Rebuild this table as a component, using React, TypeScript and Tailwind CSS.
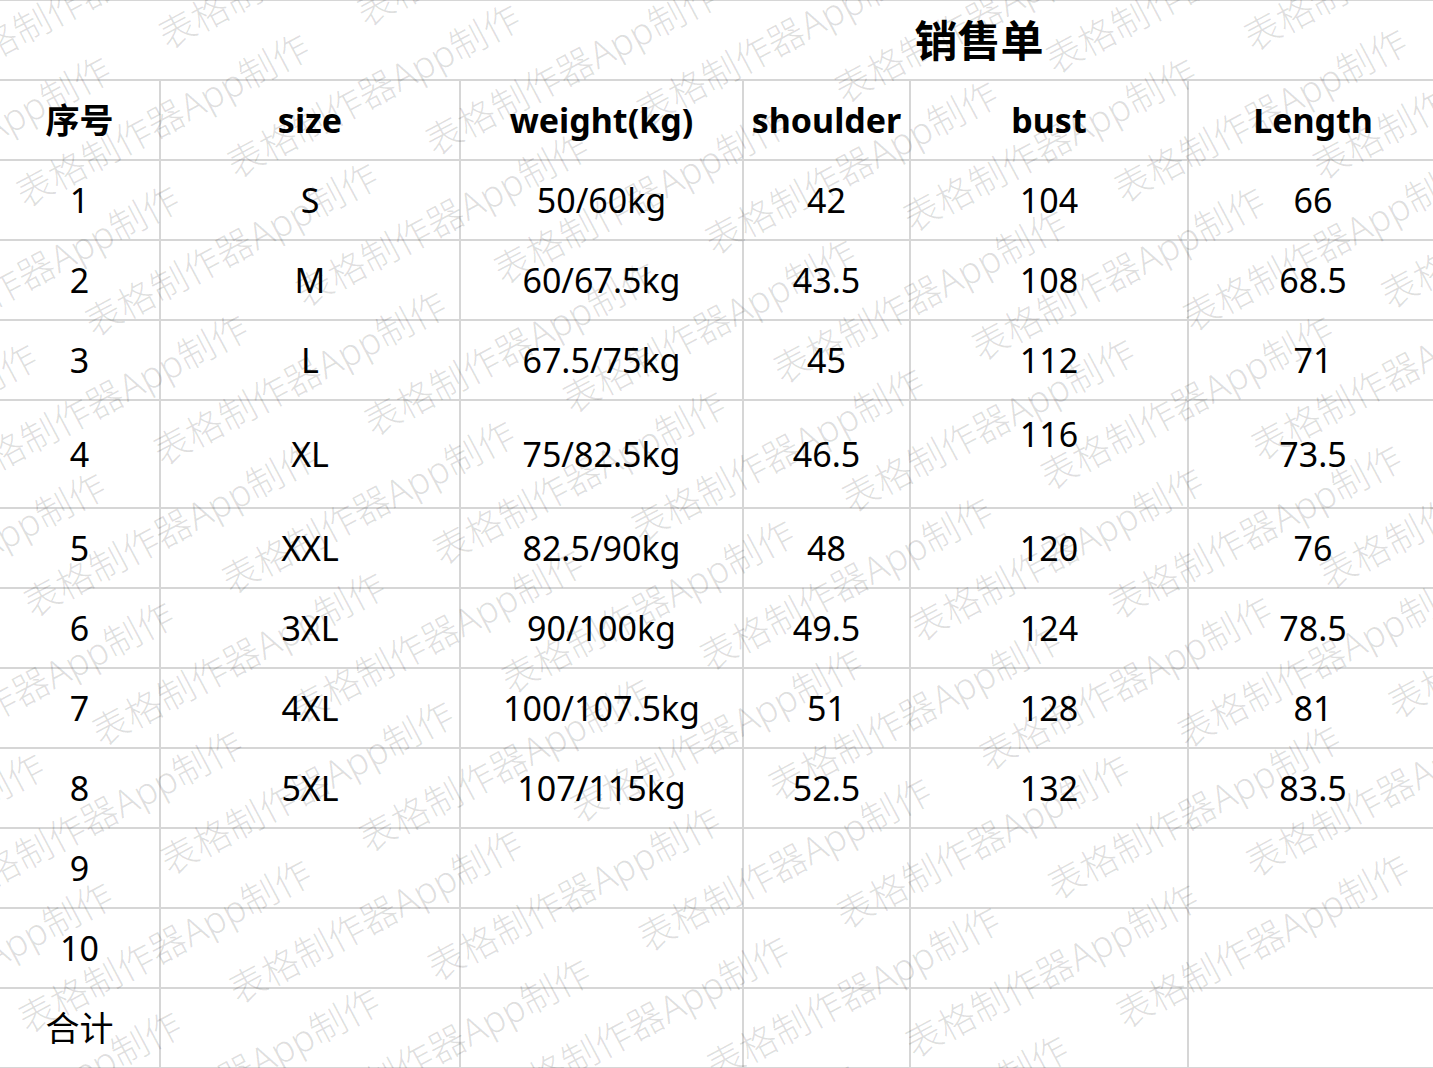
import React from 'react';

const FONT = "font-['Noto_Sans','Noto_Sans_CJK_SC',sans-serif]";

const headers = ['序号', 'size', 'weight(kg)', 'shoulder', 'bust', 'Length'];
const widths = ['w-[161px]', 'w-[300px]', 'w-[283px]', 'w-[167px]', 'w-[278px]', 'w-[250px]'];

const rows: string[][] = [
    ['1', 'S', '50/60kg', '42', '104', '66'],
    ['2', 'M', '60/67.5kg', '43.5', '108', '68.5'],
    ['3', 'L', '67.5/75kg', '45', '112', '71'],
    ['4', 'XL', '75/82.5kg', '46.5', '116', '73.5'],
    ['5', 'XXL', '82.5/90kg', '48', '120', '76'],
    ['6', '3XL', '90/100kg', '49.5', '124', '78.5'],
    ['7', '4XL', '100/107.5kg', '51', '128', '81'],
    ['8', '5XL', '107/115kg', '52.5', '132', '83.5'],
    ['9', '', '', '', '', ''],
    ['10', '', '', '', '', ''],
    ['合计', '', '', '', '', ''],
];

const cell = 'border-2 border-[#d6d6d6] text-center align-middle p-0';

// Tiled watermark drawn over the sheet
const Watermark: React.FC = () => {
    const lines = Array.from({ length: 30 });
    const reps = Array.from({ length: 9 });
    return (
        <div className="pointer-events-none absolute inset-0 overflow-hidden">
            <div className="absolute left-[-750px] top-[-1050px] w-[2950px] -rotate-[28deg] origin-center flex flex-col gap-[36px]">
                {lines.map((_, i) => (
                    <div
                        key={i}
                        className={`flex gap-[60px] whitespace-nowrap text-[37px] font-light leading-none text-black/[0.13] ${i % 2 ? 'pl-[200px]' : ''}`}
                    >
                        {reps.map((_, j) => (
                            <span key={j}>表格制作器App制作</span>
                        ))}
                    </div>
                ))}
            </div>
        </div>
    );
};

export default function App() {
    return (
        <div className={`relative w-[1433px] h-[1068px] overflow-hidden bg-white text-black ${FONT}`}>
            <table className="table-fixed border-collapse w-[1439px] -mt-px -ml-[2px]">
                <colgroup>
                    {widths.map((w, i) => (
                        <col key={i} className={w} />
                    ))}
                </colgroup>
                <tbody>
                    {/* Title row */}
                    <tr className="h-[80px]">
                        <td colSpan={6} className={cell}>
                            <div className="pl-[521px] text-center text-[43px] font-bold leading-none">销售单</div>
                        </td>
                    </tr>
                    <tr className="h-[80px]">
                        {headers.map((h) => (
                            <td key={h} className={`${cell} text-[34px] font-bold`}>
                                {h}
                            </td>
                        ))}
                    </tr>
                    {rows.map((r) => (
                        <tr key={r[0]} className={r[0] === '4' ? 'h-[108px]' : 'h-[80px]'}>
                            {r.map((v, i) => (
                                <td key={i} className={`${cell} text-[34px]`}>
                                    {r[0] === '4' && i === 4 ? <div className="pb-[40px]">{v}</div> : v}
                                </td>
                            ))}
                        </tr>
                    ))}
                </tbody>
            </table>
            <Watermark />
        </div>
    );
}
